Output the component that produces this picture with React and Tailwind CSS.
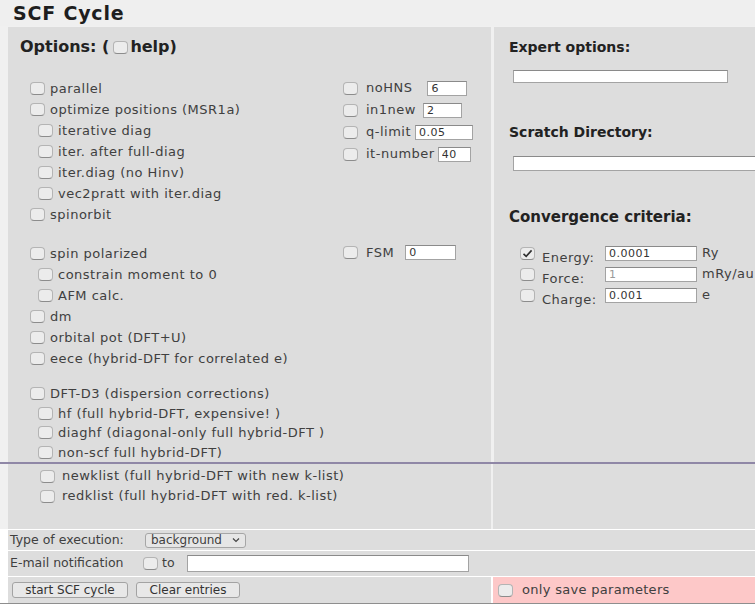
import clsx from "clsx";

// checkbox in the old gtk look: pale rounded box with a darker bottom edge
const Box = ({ checked }) => (
  <span className="inline-flex h-[13px] w-[15px] shrink-0 items-center justify-center rounded-[4px] border border-[#b4b4b4] border-b-[#8c8c8c] bg-[#ececec]">
    {checked && (
      <svg width="11" height="9" viewBox="0 0 11 9" fill="none">
        <path d="M1.5 4.8 L4.2 7.4 L9.6 1.4" stroke="#2f2f2f" strokeWidth="1.6" />
      </svg>
    )}
  </span>
);

const Field = ({ value, className, muted }) => (
  <input
    readOnly
    value={value}
    className={clsx(
      "block border border-[#a3a3a3] border-t-[#8a8a8a] bg-white pl-[3px] text-[11px] leading-none outline-none",
      muted ? "text-[#9a9a9a]" : "text-[#333]",
      className
    )}
  />
);

const Opt = ({ label, nested, h = "h-[21px]" }) => (
  <div className={clsx("flex items-center gap-[5px]", h, nested ? "pl-[30px]" : "pl-[22px]")}>
    <Box />
    <span className="whitespace-nowrap">{label}</span>
  </div>
);

const groupOne = [
  { label: "parallel" },
  { label: "optimize positions (MSR1a)" },
  { label: "iterative diag", nested: true },
  { label: "iter. after full-diag", nested: true },
  { label: "iter.diag (no Hinv)", nested: true },
  { label: "vec2pratt with iter.diag", nested: true },
  { label: "spinorbit" },
];

const groupTwo = [
  { label: "spin polarized" },
  { label: "constrain moment to 0", nested: true },
  { label: "AFM calc.", nested: true },
  { label: "dm" },
  { label: "orbital pot (DFT+U)" },
  { label: "eece (hybrid-DFT for correlated e)" },
];

const groupThree = [
  { label: "DFT-D3 (dispersion corrections)" },
  { label: "hf (full hybrid-DFT, expensive! )", nested: true },
  { label: "diaghf (diagonal-only full hybrid-DFT )", nested: true },
  { label: "non-scf full hybrid-DFT)", nested: true },
];

const sideOpts = [
  { label: "noHNS", value: "6", w: "w-[40px]", gap: "ml-[15px]" },
  { label: "in1new", value: "2", w: "w-[39px]", gap: "ml-[7px]" },
  { label: "q-limit", value: "0.05", w: "w-[58px]", gap: "ml-[4px]" },
  { label: "it-number", value: "40", w: "w-[33px]", gap: "ml-[3px]" },
];

const criteria = [
  { label: "Energy:", value: "0.0001", unit: "Ry", checked: true },
  { label: "Force:", value: "1", unit: "mRy/au", muted: true },
  { label: "Charge:", value: "0.001", unit: "e" },
];

export default function App() {
  return (
    <div className="h-[607px] w-[755px] overflow-hidden bg-white font-['DejaVu_Sans',sans-serif] text-[13px] tracking-[0.5px] text-[#404040]">
      <div className="flex h-[26px] items-center bg-[#efefef] pl-[13px] text-[19px] font-bold tracking-[0.8px] text-[#1e1e1e]">
        SCF Cycle
      </div>

      {/* options table */}
      <div className="flex h-[436px] gap-[3px] bg-[#f0f0f0] pl-[8px] pt-[1px]">
        <div className="flex w-[483px] bg-[#dddddd]">
          <div className="flex-1">
            <div className="flex h-[40px] items-center pl-[12px] text-[16px] font-bold tracking-normal text-[#222]">
              Options: (
              <span className="ml-[4px] mr-[2px] inline-flex">
                <Box />
              </span>
              help)
            </div>
            <div className="mt-[11px]">
              {groupOne.map((o) => (
                <Opt key={o.label} {...o} />
              ))}
            </div>
            <div className="mt-[18px]">
              {groupTwo.map((o) => (
                <Opt key={o.label} {...o} />
              ))}
            </div>
            <div className="mt-[15px]">
              {groupThree.map((o) => (
                <Opt key={o.label} {...o} h="h-[19.5px]" />
              ))}
            </div>
          </div>

          <div className="w-[148px] pt-[50px]">
            {sideOpts.map((o) => (
              <div key={o.label} className="flex h-[22px] items-center">
                <Box />
                <span className="ml-[8px] whitespace-nowrap">{o.label}</span>
                <Field value={o.value} className={clsx("h-[15px]", o.w, o.gap)} />
              </div>
            ))}
            <div className="mt-[77px] flex h-[21px] items-center">
              <Box />
              <span className="ml-[8px]">FSM</span>
              <Field value="0" className="ml-[11px] h-[15px] w-[51px]" />
            </div>
          </div>
        </div>

        <div className="flex-1 overflow-hidden bg-[#dddddd]">
          <div className="flex h-[40px] items-center pl-[15px] text-[14px] font-bold tracking-normal text-[#222]">
            Expert options:
          </div>
          <Field value="" className="ml-[19px] mt-[3px] h-[13px] w-[215px]" />
          <div className="mt-[37px] flex h-[24px] items-center pl-[15px] text-[14px] font-bold tracking-normal text-[#222]">
            Scratch Directory:
          </div>
          <Field value="" className="ml-[19px] mt-[12px] h-[15px] w-[260px]" />
          <div className="mt-[34px] flex h-[24px] items-center pl-[15px] text-[15px] font-bold tracking-normal text-[#222]">
            Convergence criteria:
          </div>
          <div className="mt-[16px]">
            {criteria.map((c) => (
              <div key={c.label} className="flex h-[21px] items-start pl-[26px] pt-[1px]">
                <span className="mt-[1px] inline-flex">
                  <Box checked={c.checked} />
                </span>
                <span className="ml-[7px] mt-[5px] w-[63px] leading-[14px]">{c.label}</span>
                <Field value={c.value} muted={c.muted} className="h-[15px] w-[92px]" />
                <span className="ml-[5px] leading-[14px]">{c.unit}</span>
              </div>
            ))}
          </div>
        </div>
      </div>

      <div className="h-[2px] bg-[#8f87a6]" />

      {/* k-list options below the rule */}
      <div className="flex h-[65px] gap-[2px] bg-[#f0f0f0] pl-[8px]">
        <div className="w-[483px] bg-[#dddddd] pt-[2px]">
          <div className="flex h-[20px] items-center gap-[7px] pl-[32px]">
            <Box />
            <span>newklist (full hybrid-DFT with new k-list)</span>
          </div>
          <div className="flex h-[20px] items-center gap-[7px] pl-[32px]">
            <Box />
            <span>redklist (full hybrid-DFT with red. k-list)</span>
          </div>
        </div>
        <div className="flex-1 bg-[#dddddd]" />
      </div>

      <div className="mt-[1px] flex h-[20px] bg-white pl-[8px] text-[12.5px] tracking-normal">
        <div className="flex flex-1 items-center bg-[#dddddd] pl-[2px]">
          <span className="w-[135px]">Type of execution:</span>
          <span className="flex h-[15px] w-[101px] items-center justify-between rounded-[3px] border border-[#a6a6a6] bg-[#e6e6e6] px-[5px] text-[12px] leading-none">
            background
            <svg width="8" height="6" viewBox="0 0 8 6" fill="none">
              <path d="M1 1.5 L4 4.5 L7 1.5" stroke="#444" strokeWidth="1.2" />
            </svg>
          </span>
        </div>
      </div>

      <div className="mt-[1px] flex h-[25px] bg-white pl-[8px] text-[12.5px] tracking-normal">
        <div className="flex flex-1 items-center bg-[#dddddd] pl-[2px]">
          <span className="w-[133px]">E-mail notification</span>
          <Box />
          <span className="ml-[4px] w-[25px]">to</span>
          <Field value="" className="h-[17px] w-[282px]" />
        </div>
      </div>

      <div className="mt-[1px] flex h-[26px] gap-[2px] bg-white pl-[8px] text-[12px] tracking-normal">
        <div className="flex w-[483px] items-center gap-[8px] bg-[#dddddd] pl-[4px]">
          <button type="button" className="h-[16px] w-[116px] rounded-[3px] border border-[#a3a3a3] bg-[#e8e8e8] leading-none text-[#333]">
            start SCF cycle
          </button>
          <button type="button" className="h-[16px] w-[104px] rounded-[3px] border border-[#a3a3a3] bg-[#e8e8e8] leading-none text-[#333]">
            Clear entries
          </button>
        </div>
        <div className="flex flex-1 items-center gap-[9px] bg-[#fdc8c8] pl-[5px] text-[13px] tracking-[0.3px]">
          <Box />
          <span>only save parameters</span>
        </div>
      </div>
      <div className="h-[1px] bg-[#8e8e8e]" />
    </div>
  );
}
